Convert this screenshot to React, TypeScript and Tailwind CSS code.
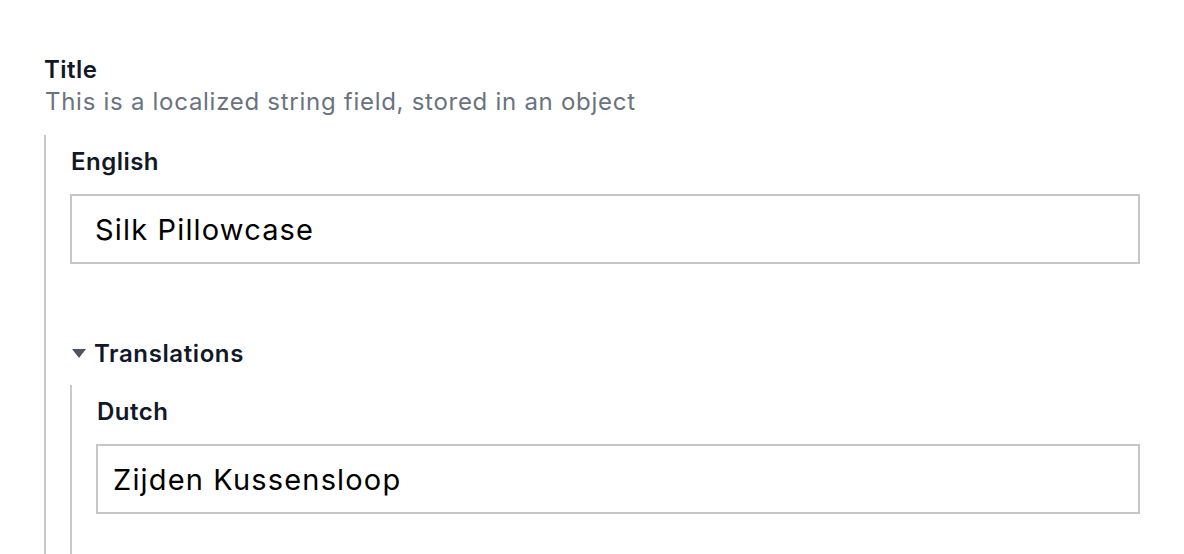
export default function App() {
  return (
    <div
      className="min-h-screen bg-white pl-[44px] pr-[44px] pt-[55px]"
      style={{ fontFamily: "Inter, 'Noto Sans', sans-serif" }}
    >
      <div className="text-[24px] leading-[30px] font-semibold tracking-[0.02em] text-[#111827]">Title</div>
      <div className="text-[24px] leading-[32px] tracking-[0.03em] text-[#6b7280] mt-[1px] ml-[1px]">
        This is a localized string field, stored in an object
      </div>

      <div className="mt-[17px] border-l-2 border-[#c9c9c9] pl-[24px] pt-[12px]">
        <div className="text-[24px] leading-[30px] font-semibold tracking-[0.02em] text-[#111827] ml-[1px]">English</div>
        <input
          readOnly
          value="Silk Pillowcase"
          className="mt-[17px] block w-full h-[70px] border-2 border-[#c6c6c6] px-[23px] text-[29px] tracking-[0.04em] text-black outline-none"
        />

        <div className="mt-[75px] flex items-center gap-[8px]">
          <svg width="14" height="10" viewBox="0 0 14 10" className="ml-[2px]">
            <path d="M0 0 L14 0 L7 9 Z" fill="#4b5563" />
          </svg>
          <span className="text-[24px] leading-[30px] font-semibold tracking-[0.025em] text-[#111827]">Translations</span>
        </div>

        <div className="mt-[16px] border-l-2 border-[#c9c9c9] pl-[24px] pt-[12px] pb-[40px]">
          <div className="text-[24px] leading-[30px] font-semibold tracking-[0.02em] text-[#111827] ml-[1px]">Dutch</div>
          <input
            readOnly
            value="Zijden Kussensloop"
            className="mt-[17px] block w-full h-[70px] border-2 border-[#c6c6c6] px-[15px] text-[29px] tracking-[0.04em] text-black outline-none"
          />
        </div>
      </div>
    </div>
  );
}
